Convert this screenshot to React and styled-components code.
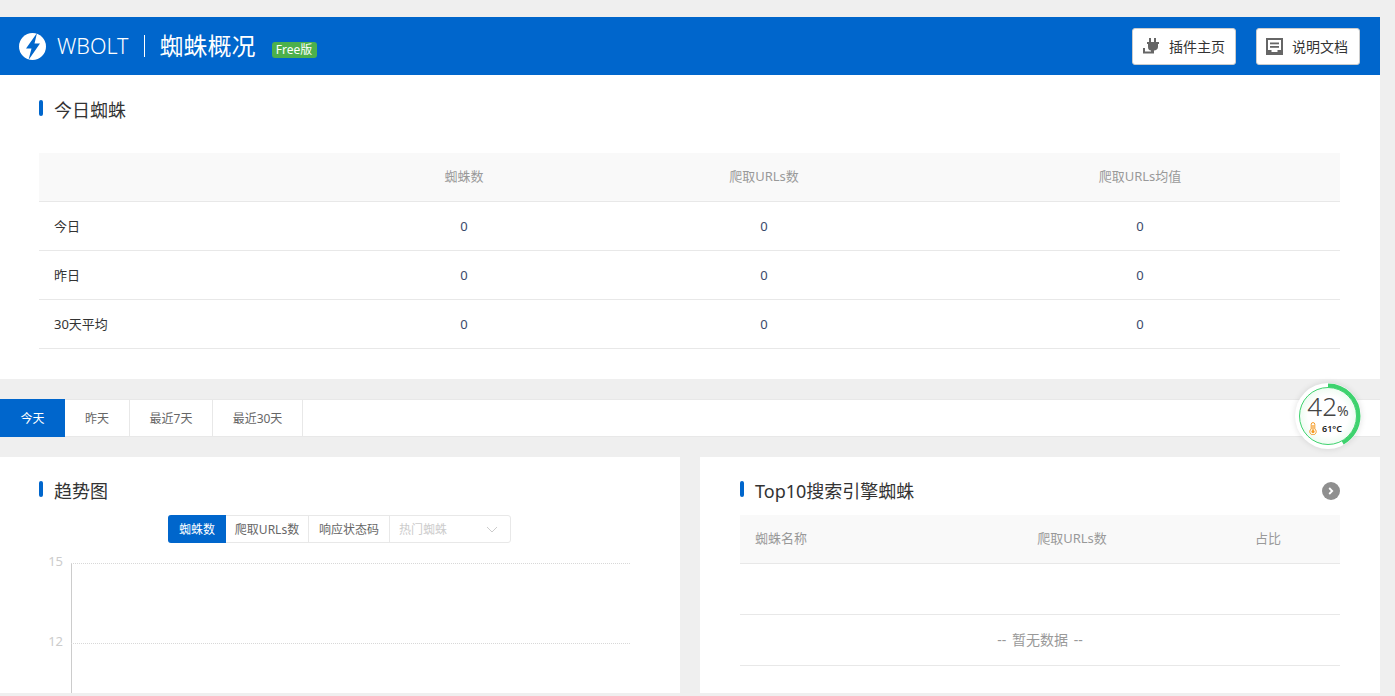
import React from 'react';
import styled, { createGlobalStyle } from 'styled-components';

const GlobalStyle = createGlobalStyle`
  html, body {
    margin: 0;
    padding: 0;
    background: #efefef;
    overflow: hidden;
  }
  body {
    font-family: "Noto Sans", "Noto Sans CJK SC", sans-serif;
    font-size: 13px;
    color: #333;
  }
  * { box-sizing: border-box; }
`;

const Page = styled.div`
  position: relative;
  width: 1380px;
  height: 696px;
  padding-top: 17px;
`;

const Header = styled.header`
  height: 58px;
  background: #0066cc;
  display: flex;
  align-items: center;
  padding: 0 20px 0 19px;
  color: #fff;
`;

const Brand = styled.span`
  font-size: 21.5px;
  font-weight: 300;
  margin-left: 11px;
  line-height: 1;
`;

const Divider = styled.i`
  width: 1px;
  height: 22px;
  background: #fff;
  margin: 0 15px;
`;

const PageTitle = styled.h1`
  margin: 0;
  font-size: 24px;
  font-weight: 400;
  line-height: 1;
`;

const Badge = styled.span`
  margin: 7px 0 0 16px;
  width: 45px;
  height: 16px;
  line-height: 16px;
  text-align: center;
  font-size: 12px;
  background: #4cb04c;
  border-radius: 3px;
  white-space: nowrap;
`;

const HeaderActions = styled.div`
  margin-left: auto;
  display: flex;
  gap: 20px;
`;

const HeaderButton = styled.a`
  width: 104px;
  height: 37px;
  display: flex;
  align-items: center;
  gap: 9px;
  padding-left: 9px;
  background: #fff;
  border: 1px solid #ccc;
  border-radius: 3px;
  font-size: 14px;
  color: #333;
`;

const Card = styled.section`
  background: #fff;
`;

const TodayCard = styled(Card)`
  height: 304px;
  padding: 0 40px 0 39px;
`;

const SectionHead = styled.div`
  display: flex;
  align-items: center;
  justify-content: space-between;
  height: ${p => p.$height}px;
  padding: ${p => p.$pad || '0'};
`;

const SectionTitle = styled.h2`
  margin: 0;
  font-size: 18px;
  font-weight: 400;
  line-height: 1;
  padding-left: 15px;
  position: relative;
  color: #333;

  &::before {
    content: '';
    position: absolute;
    left: 0;
    top: -1px;
    width: 4px;
    height: 16px;
    border-radius: 2px;
    background: #0066cc;
  }
`;

const Row = styled.div`
  display: grid;
  grid-template-columns: ${p => p.$cols};
  align-items: center;
  height: 49px;
  padding-bottom: ${p => (p.$head ? '3px' : '0')};
  border-bottom: 1px solid #e8e8e8;
  background: ${p => (p.$head ? '#f9f9f9' : 'transparent')};
  color: ${p => (p.$head ? '#999' : '#333')};
`;

const Cell = styled.div`
  text-align: ${p => (p.$left ? 'left' : 'center')};
  padding-left: ${p => (p.$left ? '15px' : '0')};
  margin-top: ${p => (p.$label ? '-2px' : '0')};
  color: ${p => (p.$num ? '#3a4a6b' : 'inherit')};
`;

const Tabs = styled.nav`
  margin-top: 20px;
  height: 38px;
  background: #fff;
  border-top: 1px solid #e8e8e8;
  border-bottom: 1px solid #e8e8e8;
  display: flex;
  font-size: 12px;
`;

const Tab = styled.a`
  width: ${p => p.$width}px;
  margin: ${p => (p.$active ? '-1px 0' : '0')};
  display: flex;
  align-items: center;
  justify-content: center;
  background: ${p => (p.$active ? '#0066cc' : '#fff')};
  color: ${p => (p.$active ? '#fff' : '#666')};
  border-right: ${p => (p.$active ? 'none' : '1px solid #e8e8e8')};
`;

const Panels = styled.div`
  margin-top: 20px;
  display: grid;
  grid-template-columns: 680px 680px;
  gap: 20px;
`;

const Panel = styled(Card)`
  height: 236px;
  overflow: hidden;
  padding: 0 ${p => (p.$right ? '40px' : '0')} 0 ${p => (p.$right ? '40px' : '39px')};
`;

const Switcher = styled.div`
  display: flex;
  width: 343px;
  height: 28px;
  margin-left: 129px;
  border: 1px solid #e8e8e8;
  border-radius: 3px;
`;

const SwitchItem = styled.a`
  width: ${p => p.$width}px;
  margin: ${p => (p.$active ? '-1px 0 -1px -1px' : '0')};
  display: flex;
  align-items: center;
  justify-content: center;
  font-size: 12px;
  background: ${p => (p.$active ? '#0066cc' : '#fff')};
  color: ${p => (p.$active ? '#fff' : '#666')};
  border-radius: ${p => (p.$active ? '3px 0 0 3px' : '0')};
  border-right: ${p => (p.$active ? 'none' : '1px solid #e8e8e8')};
`;

const SelectBox = styled.div`
  flex: 1;
  display: flex;
  align-items: center;
  justify-content: space-between;
  padding: 0 12px 0 9px;
  font-size: 12px;
  color: #ccc;
`;

const Chart = styled.svg`
  display: block;
  margin: 8px 0 0 -39px;
`;

const AxisLabel = styled.text`
  font-size: 13px;
  fill: #ccc;
`;

const MoreDot = styled.a`
  width: 18px;
  height: 18px;
  border-radius: 50%;
  background: #8f8f8f;
  display: flex;
  align-items: center;
  justify-content: center;
`;

const EmptyRow = styled.div`
  height: 51px;
  padding-bottom: 3px;
  border-bottom: 1px solid #e8e8e8;
  display: flex;
  align-items: center;
  justify-content: center;
  font-size: 14px;
  word-spacing: 2px;
  color: #999;
`;

const Gauge = styled.div`
  position: absolute;
  left: 1295px;
  top: 383px;
  width: 66px;
  height: 66px;
  border-radius: 50%;
  background: #fff;
  box-shadow: 0 0 6px rgba(0, 0, 0, 0.12);
`;

const GaugeRing = styled.svg`
  position: absolute;
  inset: 0;
`;

const GaugeFace = styled.div`
  position: absolute;
  inset: 4px;
  border-radius: 50%;
  border: 1px solid #3ed26e;
  background: radial-gradient(circle, #fff 50%, #d8f7df 100%);
  display: flex;
  flex-direction: column;
  align-items: center;
`;

const GaugeValue = styled.div`
  margin-top: 7px;
  font-size: 26px;
  font-weight: 300;
  line-height: 23px;
  color: #444;
  white-space: nowrap;

  small {
    font-size: 14px;
    font-weight: 400;
  }
`;

const GaugeTemp = styled.div`
  display: flex;
  align-items: center;
  gap: 5px;
  margin-right: 5px;
  font-size: 9px;
  font-weight: 600;
  line-height: 13px;
  color: #222;
`;

const LogoIcon = () => (
  <svg width="27" height="27" viewBox="0 0 27 27">
    <circle cx="13.5" cy="13.5" r="13.5" fill="#fff" />
    <path d="M18 0 L7 15.5 H12.5 L9.5 27 L21 10.5 H15.5 Z" fill="#0066cc" />
  </svg>
);

const PlugIcon = () => (
  <svg width="18" height="18" viewBox="0 0 18 18" fill="#666">
    <rect x="7" y="1" width="2" height="5" />
    <rect x="12" y="1" width="2" height="5" />
    <path d="M5 5 H17 V7 H16 V10 C16 12 14 13.5 12 13.5 H9 C7 13.5 6 12 6 10 V7 H5 Z" />
    <path d="M9 13 H12 V16.5 H1 V11 H3 V14.5 H9 Z" />
  </svg>
);

const DocIcon = () => (
  <svg width="17" height="17" viewBox="0 0 17 17">
    <path fill="#666" fillRule="evenodd" d="M0 0 H17 V17 H0 Z M2 2 V12 H5.5 V14 H11.5 V12 H15 V2 Z" />
    <rect x="4" y="4.5" width="9" height="1.8" fill="#666" />
    <rect x="4" y="8" width="9" height="1.8" fill="#666" />
  </svg>
);

const ThermoIcon = () => (
  <svg width="8" height="13" viewBox="0 0 8 13" fill="none">
    <path d="M2.2 7 V2.4 a1.8 1.8 0 0 1 3.6 0 V7 a3.2 3.2 0 1 1 -3.6 0 Z" stroke="#f59a23" strokeWidth="1" />
    <rect x="3.4" y="3" width="1.2" height="6" fill="#f59a23" />
    <circle cx="4" cy="9.6" r="1.6" fill="#f59a23" />
  </svg>
);

const todayCols = '301px 248px 352px 400px';
const topCols = '208px 248px 144px';
const todayRows = ['今日', '昨日', '30天平均'];
const tabs = [['今天', 65], ['昨天', 65], ['最近7天', 83], ['最近30天', 90]];

export default function App() {
  return (
    <Page>
      <GlobalStyle />
      <Header>
        <LogoIcon />
        <Brand>WBOLT</Brand>
        <Divider />
        <PageTitle>蜘蛛概况</PageTitle>
        <Badge>Free版</Badge>
        <HeaderActions>
          <HeaderButton><PlugIcon />插件主页</HeaderButton>
          <HeaderButton><DocIcon />说明文档</HeaderButton>
        </HeaderActions>
      </Header>

      <TodayCard>
        <SectionHead $height={78} $pad="0 0 8px">
          <SectionTitle>今日蜘蛛</SectionTitle>
        </SectionHead>
        <Row $head $cols={todayCols}>
          <Cell />
          <Cell>蜘蛛数</Cell>
          <Cell>爬取URLs数</Cell>
          <Cell>爬取URLs均值</Cell>
        </Row>
        {todayRows.map(label => (
          <Row key={label} $cols={todayCols}>
            <Cell $left $label>{label}</Cell>
            <Cell $num>0</Cell>
            <Cell $num>0</Cell>
            <Cell $num>0</Cell>
          </Row>
        ))}
      </TodayCard>

      <Tabs>
        {tabs.map(([label, width], i) => (
          <Tab key={label} $width={width} $active={i === 0}>{label}</Tab>
        ))}
      </Tabs>

      <Panels>
        <Panel>
          <SectionHead $height={58} $pad="10px 0 0">
            <SectionTitle>趋势图</SectionTitle>
          </SectionHead>
          <Switcher>
            <SwitchItem $active $width={58}>蜘蛛数</SwitchItem>
            <SwitchItem $width={83}>爬取URLs数</SwitchItem>
            <SwitchItem $width={81}>响应状态码</SwitchItem>
            <SelectBox>
              热门蜘蛛
              <svg width="12" height="7" viewBox="0 0 12 7" fill="none">
                <path d="M1 1 L6 6 L11 1" stroke="#ccc" strokeWidth="1" />
              </svg>
            </SelectBox>
          </Switcher>
          <Chart width="680" height="150" viewBox="0 0 680 150">
            <AxisLabel x="63" y="15" textAnchor="end">15</AxisLabel>
            <AxisLabel x="63" y="95" textAnchor="end">12</AxisLabel>
            <path d="M71.5 12 V150" stroke="#ccc" />
            <path d="M71 12.5 H631 M71 92.5 H631" stroke="#d8d8d8" strokeDasharray="1 1" />
          </Chart>
        </Panel>

        <Panel $right>
          <SectionHead $height={58} $pad="10px 0 0">
            <SectionTitle>Top10搜索引擎蜘蛛</SectionTitle>
            <MoreDot>
              <svg width="6" height="8" viewBox="0 0 6 8" fill="none">
                <path d="M1.2 1 L4.2 4 L1.2 7" stroke="#fff" strokeWidth="1.8" />
              </svg>
            </MoreDot>
          </SectionHead>
          <Row $head $cols={topCols}>
            <Cell $left>蜘蛛名称</Cell>
            <Cell>爬取URLs数</Cell>
            <Cell>占比</Cell>
          </Row>
          <EmptyRow />
          <EmptyRow>-- 暂无数据 --</EmptyRow>
        </Panel>
      </Panels>

      <Gauge>
        <GaugeRing width="66" height="66" viewBox="0 0 66 66">
          <circle
            cx="33"
            cy="33"
            r="30.5"
            fill="none"
            stroke="#3ed26e"
            strokeWidth="4"
            pathLength="100"
            strokeDasharray="42 100"
            transform="rotate(-90 33 33)"
          />
        </GaugeRing>
        <GaugeFace>
          <GaugeValue>42<small>%</small></GaugeValue>
          <GaugeTemp><ThermoIcon />61°C</GaugeTemp>
        </GaugeFace>
      </Gauge>
    </Page>
  );
}
